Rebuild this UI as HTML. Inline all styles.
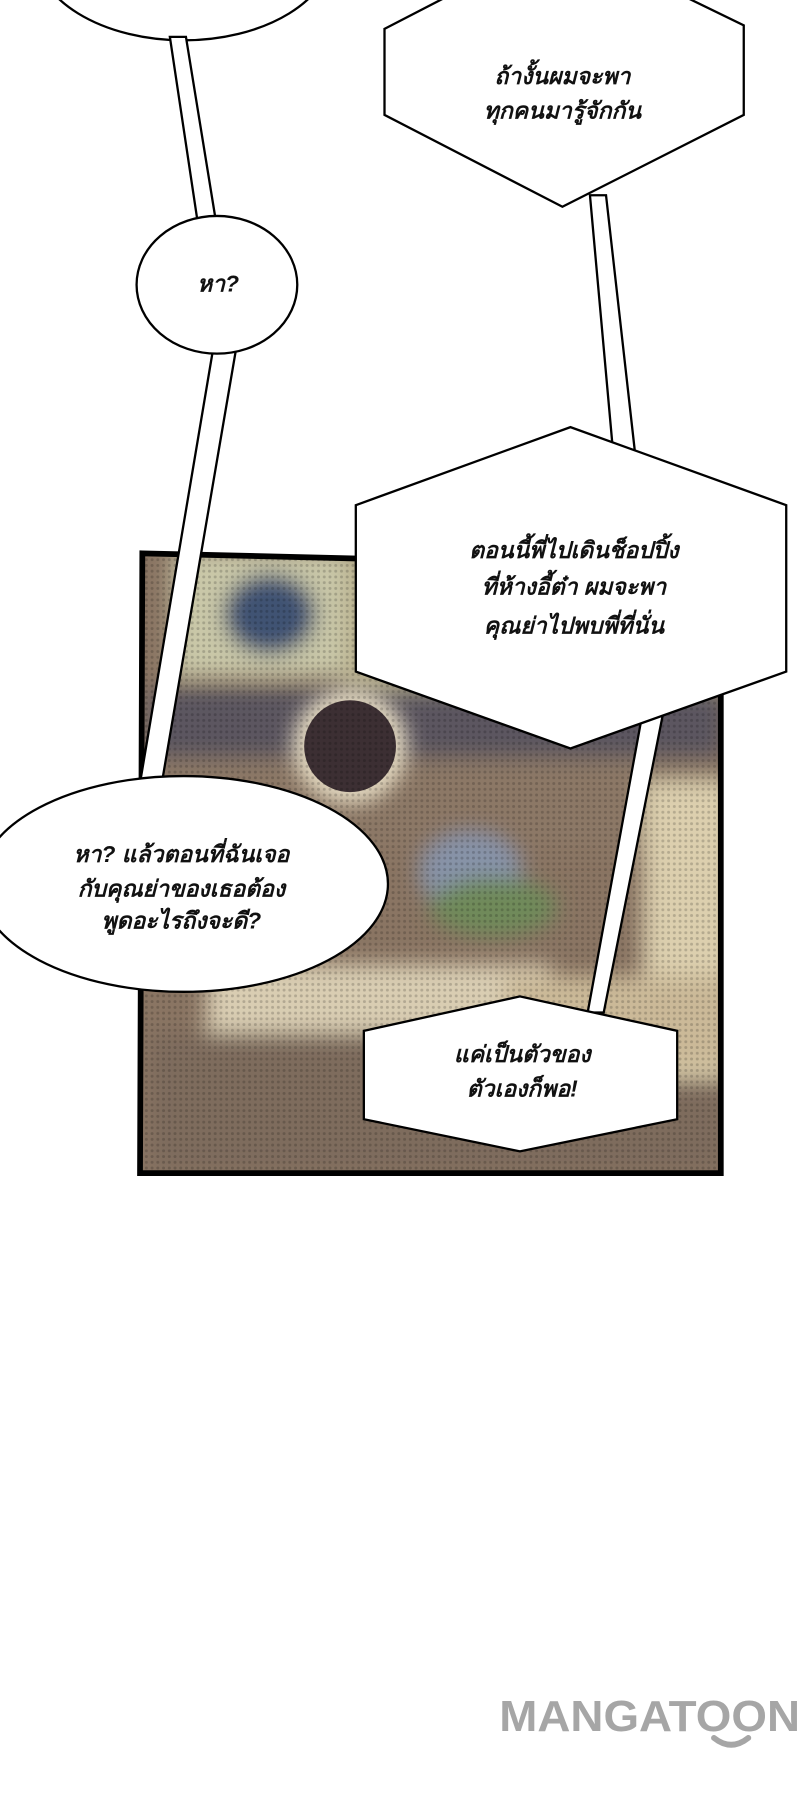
<!DOCTYPE html>
<html><head><meta charset="utf-8"><style>
html,body{margin:0;padding:0;background:#fff;width:800px;height:1800px;overflow:hidden}
svg{display:block}
text{font-family:"Liberation Sans","DejaVu Sans",sans-serif;font-style:italic;font-size:20px;font-weight:bold;fill:#111;text-anchor:middle}
</style></head><body>
<svg width="800" height="1800" viewBox="0 0 697 1568" xmlns="http://www.w3.org/2000/svg">
<defs>
<clipPath id="pc"><polygon points="124,482 628,494 628,1022 122,1022"/></clipPath>
<filter id="bl" x="-20%" y="-20%" width="140%" height="140%"><feGaussianBlur stdDeviation="9"/></filter>
<pattern id="dots" width="5" height="5" patternUnits="userSpaceOnUse"><circle cx="2.5" cy="2.5" r="1.3" fill="#000" opacity="0.18"/></pattern>
</defs>
<rect width="697" height="1568" fill="#fff"/>
<g clip-path="url(#pc)">
<rect x="110" y="470" width="530" height="560" fill="#8a7563"/>
<g filter="url(#bl)">
<rect x="150" y="480" width="200" height="110" fill="#c9c7a8"/>
<rect x="300" y="480" width="330" height="130" fill="#b9b18f"/>
<ellipse cx="235" cy="535" rx="40" ry="35" fill="#3f5273"/>
<rect x="130" y="600" width="500" height="60" fill="#5c5660"/>
<rect x="130" y="660" width="500" height="80" fill="#8c7866"/>
<ellipse cx="410" cy="760" rx="45" ry="35" fill="#8793a8"/>
<ellipse cx="430" cy="790" rx="55" ry="25" fill="#6f8a5a"/>
<rect x="180" y="840" width="300" height="60" fill="#d9cdb2"/>
<rect x="130" y="900" width="500" height="120" fill="#7e6c5d"/>
<rect x="560" y="680" width="80" height="260" fill="#dccfae"/>
<rect x="440" y="850" width="200" height="80" fill="#cbb998"/>
</g>
<circle cx="305" cy="650" r="50" fill="#e6dcc3" filter="url(#bl)"/>
<circle cx="305" cy="650" r="40" fill="#3c2f33"/>
<rect x="110" y="470" width="530" height="560" fill="url(#dots)"/>
</g>
<polygon points="124,482 628,494 628,1022 122,1022" fill="none" stroke="#000" stroke-width="5"/>
<ellipse cx="160" cy="-45" rx="130" ry="80" fill="#fff" stroke="#000" stroke-width="2"/>
<polygon points="148,32 162,32 188,192 172,192" fill="#fff" stroke="#000" stroke-width="2"/>
<polygon points="186,302 206,302 141,682 122,682" fill="#fff" stroke="#000" stroke-width="2"/>
<polygon points="514,170 528,170 553,392 534,392" fill="#fff" stroke="#000" stroke-width="2"/>
<polygon points="560,620 578,620 526,882 512,882" fill="#fff" stroke="#000" stroke-width="2"/>
<ellipse cx="189" cy="248" rx="70" ry="60" fill="#fff" stroke="#000" stroke-width="2"/>
<text x="190" y="254">หา?</text>
<ellipse cx="160" cy="770" rx="178" ry="94" fill="#fff" stroke="#000" stroke-width="2"/>
<text x="158" y="751">หา? แล้วตอนที่ฉันเจอ</text>
<text x="158" y="781">กับคุณย่าของเธอต้อง</text>
<text x="158" y="809">พูดอะไรถึงจะดี?</text>
<polygon points="335,25 490,-55 648,22 648,100 490,180 335,100" fill="#fff" stroke="#000" stroke-width="2"/>
<text x="490" y="73">ถ้างั้นผมจะพา</text>
<text x="490" y="103">ทุกคนมารู้จักกัน</text>
<polygon points="310,440 497,372 685,440 685,585 497,652 310,585" fill="#fff" stroke="#000" stroke-width="2"/>
<text x="500" y="486">ตอนนี้พี่ไปเดินช็อปปิ้ง</text>
<text x="500" y="518">ที่ห้างอี้ต๋า ผมจะพา</text>
<text x="500" y="552">คุณย่าไปพบพี่ที่นั่น</text>
<polygon points="317,898 453,868 590,898 590,975 453,1003 317,975" fill="#fff" stroke="#000" stroke-width="2"/>
<text x="455" y="925">แค่เป็นตัวของ</text>
<text x="455" y="955">ตัวเองก็พอ!</text>
<text x="566" y="1508" textLength="262" lengthAdjust="spacingAndGlyphs" style="font-style:normal;font-weight:bold;font-size:38px;fill:#a6a6a6">MANGATOON</text>
<path d="M622,1514 Q637,1526 652,1514" fill="none" stroke="#a6a6a6" stroke-width="5" stroke-linecap="round"/>
</svg>
</body></html>
